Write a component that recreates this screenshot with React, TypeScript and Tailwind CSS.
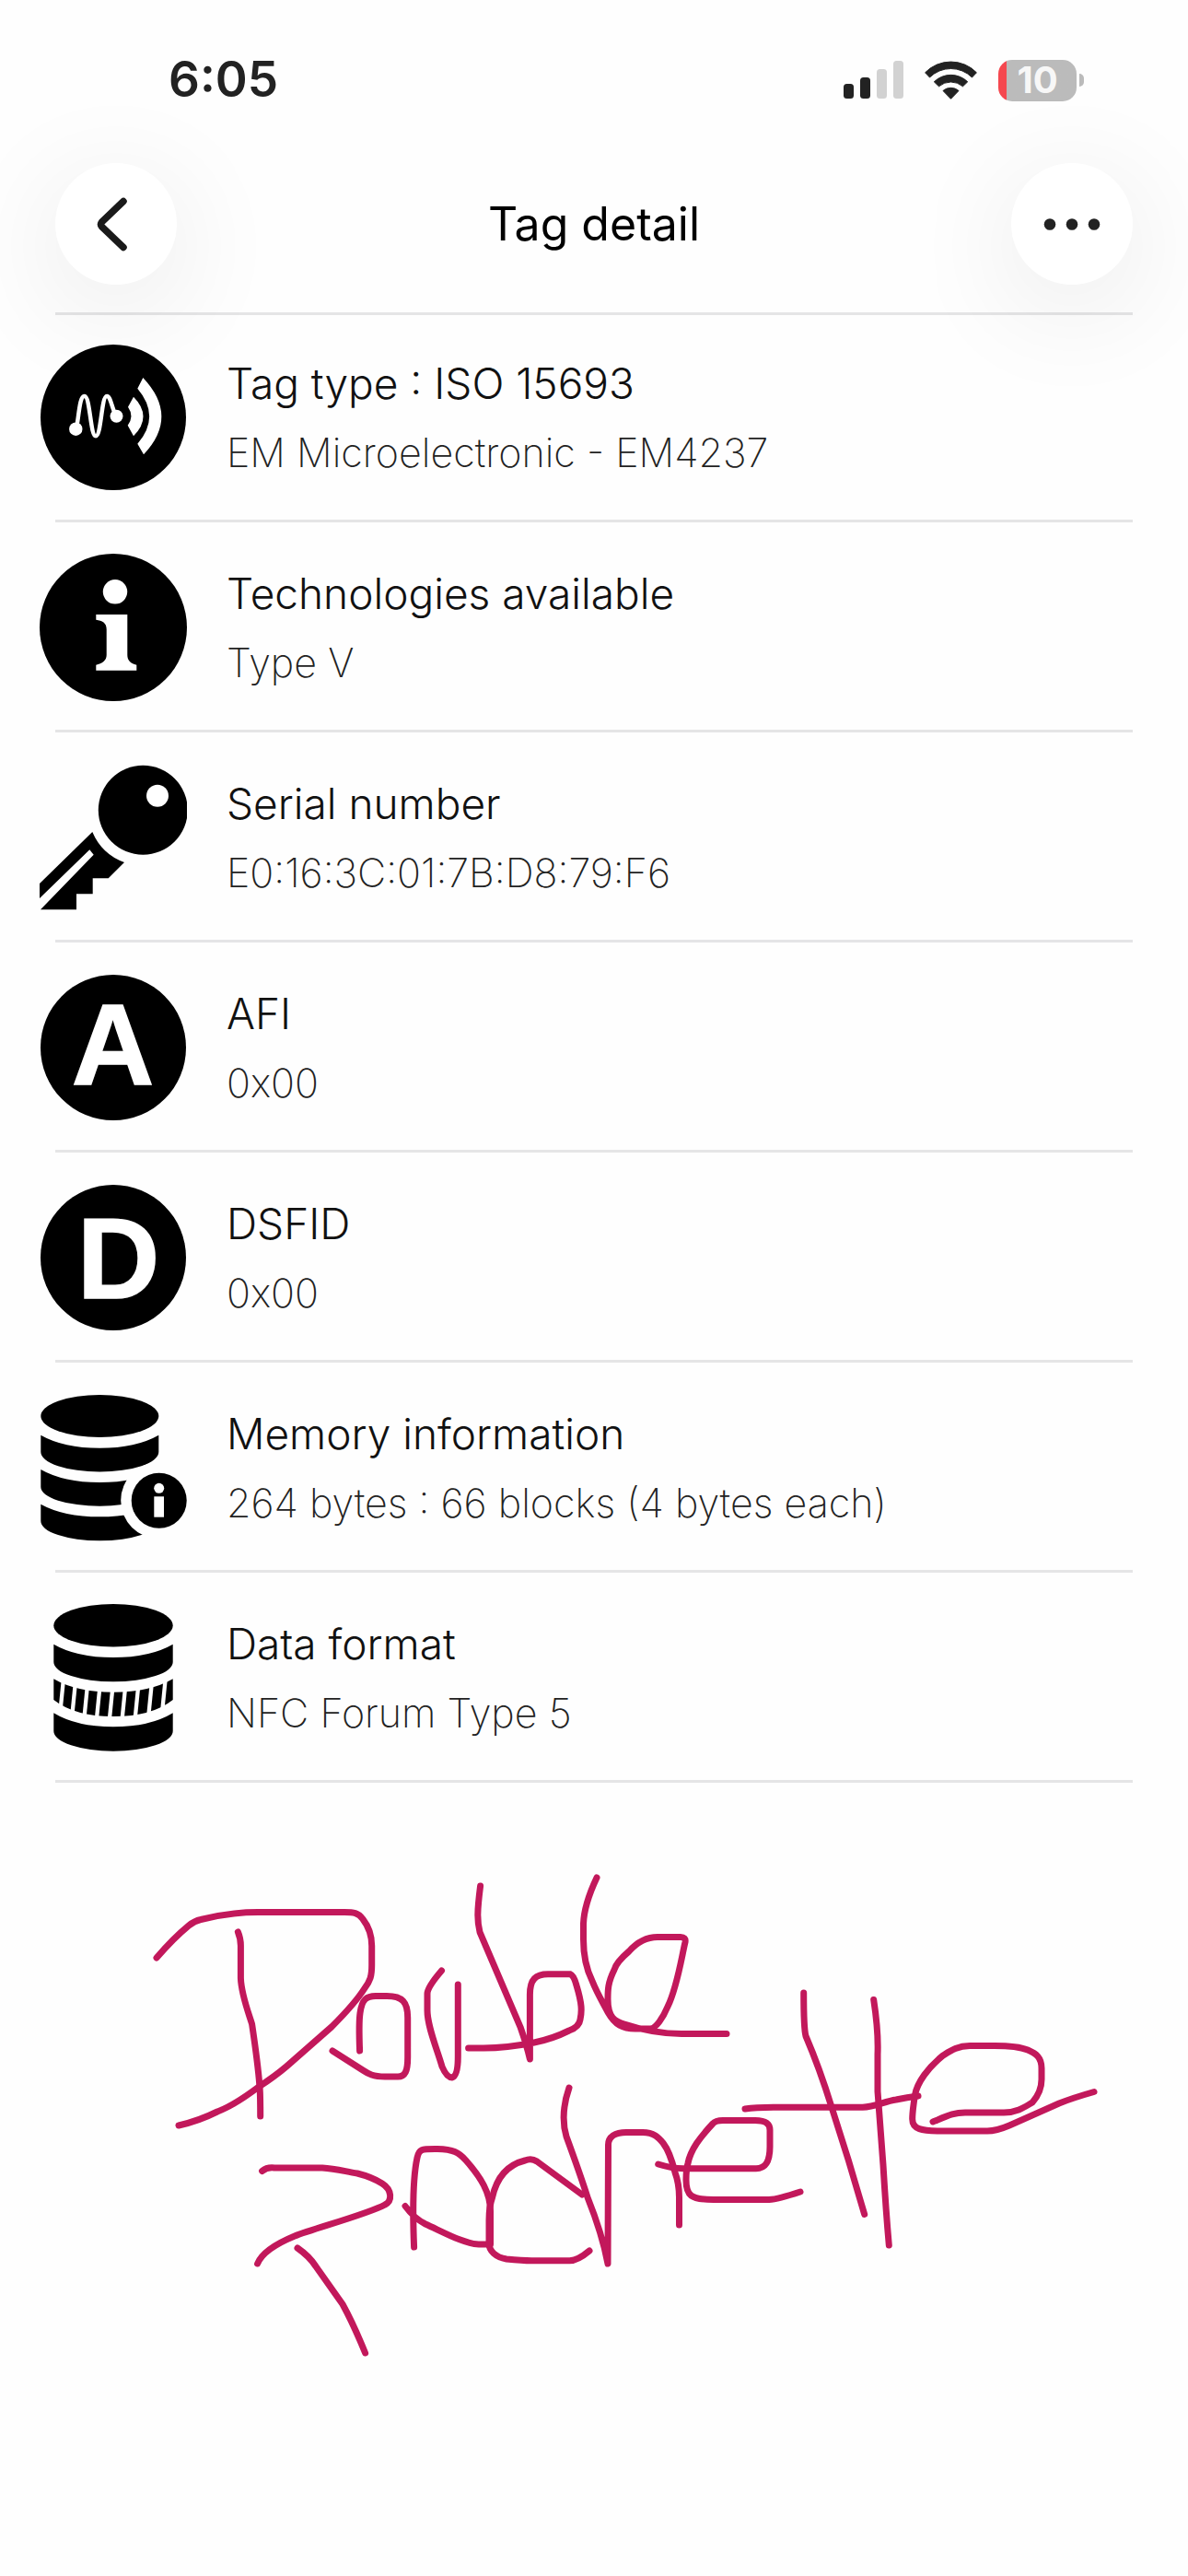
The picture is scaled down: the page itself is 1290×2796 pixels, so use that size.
import type { ReactNode } from "react";

const WaveIcon = () => (
  <svg viewBox="0 0 160 160" className="size-40" aria-hidden="true">
    <circle cx="80" cy="80" r="79" />
    <path
      d="M40.3 90C43 75 43.500 57 48.700 57C55 57 55 100.300 61 100.300C67 100.300 67 57 73 57C77 57 78 68 82 76"
      fill="none"
      stroke="#fff"
      strokeWidth="4.500"
    />
    <circle cx="39.300" cy="92.700" r="7.200" fill="#fff" />
    <circle cx="83.500" cy="78.700" r="7" fill="#fff" />
    <path d="M102 57.700L96 68.700Q103 78.700 95.700 88.700L102 100.300Q123 79 102 57.700Z" fill="#fff" />
    <path d="M112.300 37L106.300 48.700Q132 79 106.300 108.700L113 120.300Q152 79 112.300 37Z" fill="#fff" />
  </svg>
);

const InfoIcon = () => (
  <svg viewBox="0 0 160 160" className="size-40" aria-hidden="true">
    <circle cx="80" cy="80" r="80" />
    <circle cx="82" cy="41.300" r="13.200" fill="#fff" />
    <path
      d="M61.300 66H95.300V110C95.300 116 99 119 105.300 120.700V126.700H61.300V120.700C68 119 72.700 116 72.700 110V82C72.700 75 68 72.500 61.300 71.700Z"
      fill="#fff"
    />
  </svg>
);

const KeyIcon = () => (
  <svg viewBox="0 0 160 160" className="size-40" aria-hidden="true">
    <circle cx="112.300" cy="50.300" r="48.500" />
    <circle cx="128" cy="34.700" r="12" fill="#fff" />
    <path d="M57.300 74A60 60 0 0 0 92 107L74.700 124.300H57.700V141.300H40V158.300H1L58.700 98.700L54.300 93.300L0 146V130Z" />
  </svg>
);

const LetterIcon = ({ letter, x, y }: { letter: string; x: number; y: number }) => (
  <svg viewBox="0 0 160 160" className="size-40" aria-hidden="true">
    <circle cx="80" cy="80" r="79" />
    <text
      x={x}
      y={y}
      textAnchor="middle"
      fill="#fff"
      stroke="#fff"
      strokeWidth="1.500"
      className="font-['Liberation_Sans',sans-serif] text-[124px] font-bold"
    >
      {letter}
    </text>
  </svg>
);

const MemoryIcon = () => (
  <svg viewBox="0 0 160 160" className="size-40" aria-hidden="true">
    <ellipse cx="65.300" cy="24" rx="64" ry="23" />
    <path d="M1.300 44.700Q26 58.700 65.300 58.700T129.300 44.700V63A64 21.500 0 0 1 1.300 63Z" />
    <path d="M1.300 82Q26 96 65.300 96T129.300 82V101A64 20.700 0 0 1 1.300 101Z" />
    <path d="M1.300 119.700Q26 133.300 65.300 133.300T129.300 119.700V138A64 21.300 0 0 1 1.300 138Z" />
    <circle cx="129.700" cy="115.700" r="41.500" fill="#fefefe" />
    <circle cx="129.700" cy="115.700" r="30" />
    <circle cx="129.700" cy="102.300" r="5.500" fill="#fff" />
    <path d="M124.300 111.300H135V133.700H124.300Z" fill="#fff" />
  </svg>
);

const stripes = [24, 37.3, 50.7, 64.3, 78.3, 92, 106, 120.3, 134.7];

const FormatIcon = () => (
  <svg viewBox="0 0 160 160" className="size-40" aria-hidden="true">
    <path d="M15.300 81.300Q40 95.700 80 95.700T144.700 81.300V104Q122 122 80 122T15.300 104Z" />
    {stripes.map((x) => (
      <path key={x} d={`M${x + 2.5} 76L${x - 2.5} 126`} stroke="#fefefe" strokeWidth="4.300" />
    ))}
    <ellipse cx="80" cy="23.300" rx="64.700" ry="23.300" />
    <path d="M15.300 43.700Q40 58 80 58T144.700 43.700V63A64.700 21.300 0 0 1 15.300 63Z" />
    <path d="M15.300 118.300Q40 133.300 80 133.300T144.700 118.300V138A64.700 21.700 0 0 1 15.300 138Z" />
  </svg>
);

const rows: { icon: ReactNode; title: string; value: string }[] = [
  { icon: <WaveIcon />, title: "Tag type : ISO 15693", value: "EM Microelectronic - EM4237" },
  { icon: <InfoIcon />, title: "Technologies available", value: "Type V" },
  { icon: <KeyIcon />, title: "Serial number", value: "E0:16:3C:01:7B:D8:79:F6" },
  { icon: <LetterIcon letter="A" x={79.5} y={119.5} />, title: "AFI", value: "0x00" },
  { icon: <LetterIcon letter="D" x={85.5} y={124} />, title: "DSFID", value: "0x00" },
  { icon: <MemoryIcon />, title: "Memory information", value: "264 bytes : 66 blocks (4 bytes each)" },
  { icon: <FormatIcon />, title: "Data format", value: "NFC Forum Type 5" },
];

const StatusBar = () => (
  <div className="flex h-[174px] items-center justify-between pr-[113px] pl-[183px] text-[#222]">
    <span className="text-[53px] font-semibold">6:05</span>
    <div className="flex items-center gap-[23px]">
      <svg width="65" height="42" viewBox="0 0 65 42" aria-hidden="true">
        <rect x="0" y="25" width="11" height="16" rx="3.500" fill="#222" />
        <rect x="18" y="18" width="11" height="23" rx="3.500" fill="#222" />
        <rect x="36" y="9" width="11" height="32" rx="3.500" fill="#d2d2d2" />
        <rect x="54" y="0" width="11" height="41" rx="3.500" fill="#d2d2d2" />
      </svg>
      <svg width="57" height="42" viewBox="0 0 57 42" aria-hidden="true">
        <g fill="#222" stroke="#222" strokeWidth="1" strokeLinejoin="round">
          <path d="M.6 12.800A39 39 0 0 1 56.400 12.800L51.500 18A32.600 32.600 0 0 0 5.500 18Z" />
          <path d="M10.300 22.800A26 26 0 0 1 46.700 22.800L41.500 27.800A20 20 0 0 0 15.500 27.800Z" />
          <path d="M20 32.500A13 13 0 0 1 37 32.500L28.500 41.300Z" />
        </g>
      </svg>
      <div className="flex items-center gap-[3px]">
        <div className="flex h-[45px] w-[85px] items-center justify-center rounded-[15px] bg-linear-to-r from-[#f5484f] from-[9px] to-[#bbb] to-[9px] text-[40px] font-bold text-[#f7f7f7]">
          10
        </div>
        <div className="h-[14px] w-[5px] rounded-r-full bg-[#bbb]" />
      </div>
    </div>
  </div>
);

const NavBar = () => (
  <nav className="mx-[60px] flex items-start justify-between border-b-3 border-[#e5e5e6] pt-[3px] pb-[30px]">
    <button
      type="button"
      aria-label="Back"
      className="size-[132px] rounded-full bg-white shadow-[0_24px_120px_10px_rgba(0,0,0,0.07)]"
    >
      <svg viewBox="0 0 132 132" className="size-full" aria-hidden="true">
        <path
          d="M74 41.500L50.500 64Q48.500 66.500 50.500 69L74 91.500"
          fill="none"
          stroke="#1a1a1a"
          strokeWidth="7.500"
          strokeLinecap="round"
          strokeLinejoin="round"
        />
      </svg>
    </button>
    <h1 className="self-center text-[50px] font-normal text-black">Tag detail</h1>
    <button
      type="button"
      aria-label="More"
      className="size-[132px] rounded-full bg-white shadow-[0_24px_120px_10px_rgba(0,0,0,0.07)]"
    >
      <svg viewBox="0 0 132 132" className="size-full" aria-hidden="true">
        <g fill="#222">
          <circle cx="42" cy="66.500" r="6.300" />
          <circle cx="66" cy="66.500" r="6.300" />
          <circle cx="90" cy="66.500" r="6.300" />
        </g>
      </svg>
    </button>
  </nav>
);

// freehand note under the list
const Scribble = () => (
  <svg viewBox="0 1935 1290 680" className="w-full" role="img" aria-label="Handwritten note">
    <g fill="none" stroke="#c2185b" strokeWidth="7" strokeLinecap="round" strokeLinejoin="round">
      <path d="M170 2125Q188 2104 205 2090Q211 2085 218 2083.500C240 2078 262 2075.500 280 2075.500H374C384 2075.500 389 2076 394 2083C401 2092 403.700 2103 403.700 2112V2133C403.700 2145 402 2150 396 2158C386 2174 372 2188 360 2200L311 2243Q298 2254 281 2265C265 2277 252 2286 236 2292Q216 2302 194 2307" />
      <path d="M258.400 2097Q261.400 2104 261.400 2112V2147C262 2165 270 2185 273.600 2197C277 2220 280 2240 281.800 2263Q282.700 2270 282.700 2297" />
      <path d="M390.600 2226C390 2210 389.500 2195 391 2185C393 2170 398 2166.500 408 2166.500H420C437 2166.500 442.700 2173 442.700 2190V2233C442.700 2248 440 2254 432 2254H418C405 2254 400 2251 394 2247L361 2226" />
      <path d="M479.500 2139Q464 2157 464 2164V2182C464 2200 475 2225 480 2243Q485 2255 491 2255Q497.300 2253 497.300 2232V2154" />
      <path d="M521.600 2047C518 2075 518 2085 521 2097L565 2200Q572 2220 575.400 2235V2165C575.400 2148 582 2142.700 595 2142.700H619Q623 2144 626 2155C632 2175 632 2183 630 2192Q629 2200 618 2204Q600 2213 580 2217Q550 2223 525 2223H508.600" />
      <path d="M648 2038C640 2055 634 2075 633.500 2088V2105C633.500 2125 637 2138 643 2150C649 2165 655 2174 660 2184C668 2198 676 2202 690 2202H706C712 2202 720 2190 725 2178C735 2158 740 2125 744 2108Q745 2102.500 739 2102.500H714C700 2102.500 691 2109 683 2118Q669 2130 667 2138C660 2152 660 2160 660 2170C660 2190 668 2194 678 2197Q710 2207.500 740 2207.500H789" />
      <path d="M284.600 2356.500Q290 2352 298 2353H350C365 2354 375 2357 388 2359Q404 2363 415 2370C426 2377 426 2389 418 2393C400 2403 340 2419 320 2427Q286 2441 279.600 2457" />
      <path d="M323 2440Q336 2449 343 2460L372 2501Q384 2523 396.600 2554" />
      <path d="M449.600 2439C448 2400 448 2365 453 2342C455 2332 458 2332.500 475 2332.500C492 2333 498 2336 506 2345C522 2363 532.500 2380 532.500 2400V2436H520C505 2436 480 2422 462 2414Q450 2408 440 2394.500" />
      <path d="M632 2382L583 2346Q577 2342 570 2345C550 2350 539 2365 534.600 2385Q531 2395 531 2410V2435C531 2443 538 2450 550 2452Q570 2454 580 2453.700H618Q627 2454 640 2443" />
      <path d="M618 2266Q608 2295 615 2319Q630 2360 638 2385Q654 2425 660 2457L660.500 2328C660.500 2319 668 2314.500 680 2314.500H698C710 2314.500 715 2320 720 2326C727 2335 731 2350 733 2358Q737.500 2370 737.500 2385V2415" />
      <path d="M714.700 2349Q730 2353.700 742 2353.700H821C832 2353.700 836 2345 836 2330V2312C836 2304 830 2301.500 820 2301.500H785Q777 2301.500 774 2305C760 2320 750 2333 747 2348Q745 2355 745 2366C745 2383 750 2387.500 774.500 2387.500H835Q845 2387 869 2379" />
      <path d="M809 2289Q820 2287.300 840 2287.300H936.700C950 2287 960 2281 973 2279Q985 2276.500 997 2275" />
      <path d="M872.700 2163C872.700 2190 873 2203 875 2210Q890 2245 903 2287Q922 2345 938.700 2403.500" />
      <path d="M948.700 2170.500Q954 2205 953 2230V2270Q954 2285 959 2350Q962 2400 965.300 2437" />
      <path d="M1013 2303C1030 2296 1036 2293 1048 2293H1090C1105 2293 1114 2286 1121 2282C1128 2274 1131 2267 1131 2257V2245C1131 2233 1125 2229 1116 2225C1106 2221 1095 2220.500 1080 2220.500H1053C1040 2220.500 1032 2226 1024 2231C1008 2244 996 2260 993.500 2274C991 2290 990.700 2295 990.700 2300C990.700 2311 1000 2313 1023 2313H1072Q1082 2313 1096 2307L1150 2283Q1165 2277 1188 2270.500" />
    </g>
  </svg>
);

const App = () => {
  return (
    <main className="min-h-screen overflow-hidden bg-[#fefefe] font-['Inter',sans-serif]">
      <header>
        <StatusBar />
        <NavBar />
      </header>
      <ul className="-mt-[3px] mx-[60px]">
        {rows.map(({ icon, title, value }) => (
          <li key={title} className="flex h-[228px] items-center gap-[43px] border-b-3 border-[#e5e5e6] pt-[3px]">
            <div className="-ml-[17px] shrink-0">{icon}</div>
            <div>
              <p className="text-[46px] leading-[76px] font-light text-[#111]">{title}</p>
              <p className="text-[43px] leading-[74px] font-extralight text-[#222]">{value}</p>
            </div>
          </li>
        ))}
      </ul>
      <Scribble />
    </main>
  );
};

export default App;
